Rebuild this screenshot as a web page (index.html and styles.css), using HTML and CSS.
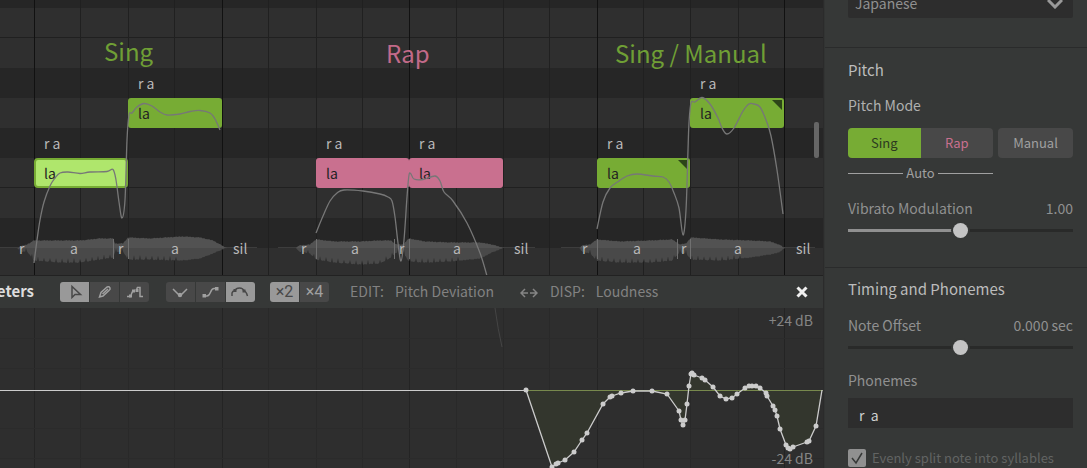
FILE: index.html
```html
<!DOCTYPE html>
<html lang="en">
<head>
<meta charset="utf-8">
<title>Voice editor</title>
<link rel="stylesheet" href="styles.css">
</head>
<body>
<div class="app">
  <main class="editor">
    <section class="roll" aria-label="Piano roll">
      <svg class="canvas" id="roll">
        <g class="keys">
          <rect class="key-dark" y="0" width="100%" height="8"/>
          <rect class="key-dark" y="68" width="100%" height="30"/>
          <rect class="key-dark" y="128" width="100%" height="30"/>
          <rect class="key-dark" y="218" width="100%" height="30"/>
          <rect class="key-line" y="37" width="100%" height="1"/>
          <rect class="key-line" y="187" width="100%" height="1"/>
        </g>
        <g id="roll-grid"></g>
        <g id="waves"></g>
        <g id="notes"></g>
        <g id="pitch"></g>
        <g id="phones"></g>
        <text class="heading sing" x="104" y="61">Sing</text>
        <text class="heading rap" x="386" y="63">Rap</text>
        <text class="heading sing" x="615" y="63">Sing / Manual</text>
        <rect class="scroll-thumb" x="814" y="122" width="5" height="36" rx="2"/>
      </svg>
    </section>
    <header class="toolbar">
      <h2 class="toolbar-title"><span>Parameters</span></h2>
      <div class="group">
        <button class="tool on" aria-label="Select"><svg width="29" height="20"><path d="M12 4.500V15.500L15 12.500H20.500Z"/></svg></button>
        <button class="tool" aria-label="Draw"><svg width="29" height="20"><path d="M9.500 15L11 10.500L17 5Q19 4 20 6Q20.500 7.500 19 8.500L13 14Z M12.500 12L18 7"/></svg></button>
        <button class="tool" aria-label="Step"><svg width="29" height="20"><path d="M7 14.500H11M11 14Q12 8 15 8.500M17 5.500V9.500M17 5.500H20V14.500H23"/><path class="solid" d="M9 12.500h3v3H9zM12 7.500h3v3h-3zM15.500 7h3v3h-3z"/></svg></button>
      </div>
      <div class="group">
        <button class="tool" aria-label="Linear"><svg width="29" height="20"><path d="M7 7L13 13H15L21 7"/><circle class="solid" cx="14" cy="13" r="2.200"/></svg></button>
        <button class="tool" aria-label="Sigmoid"><svg width="29" height="20"><path d="M8 14H11C15 14 14 6.500 18 6.500H21"/><path class="solid" d="M6.500 12h3.500v3.500H6.500zM19 5h3.500v3.500H19z"/></svg></button>
        <button class="tool on" aria-label="Curve"><svg width="29" height="20"><path d="M6 14V11Q6.500 9 9 8.500M9 8.500Q10 6 13.500 6Q17 6 18 9Q20 9 21.500 14"/><path class="solid" d="M7.500 7h3v3h-3zM16.500 7.500h3v3h-3z"/></svg></button>
      </div>
      <div class="group">
        <button class="tool on">×2</button>
        <button class="tool">×4</button>
      </div>
      <div class="param edit"><span>EDIT:</span><span>Pitch Deviation</span></div>
      <button class="swap" aria-label="Swap"><svg width="18" height="12"><path d="M8 6H1M5 2L1 6L5 10M10 6H17M13 2L17 6L13 10"/></svg></button>
      <div class="param"><span>DISP:</span><span>Loudness</span></div>
      <button class="close" aria-label="Close"><svg width="12" height="12"><path d="M1.500 1.500L10.500 10.500M10.500 1.500L1.500 10.500"/></svg></button>
    </header>
    <section class="params" aria-label="Loudness">
      <svg class="canvas" id="params">
        <g id="param-grid"></g>
        <path class="ghost" d="M495 0Q498 22 502 39"/>
        <g id="loudness"></g>
      </svg>
      <span class="scale top">+24 dB</span>
      <span class="scale bottom">-24 dB</span>
    </section>
  </main>
  <aside class="panel">
    <section class="block language">
      <div class="select-box">
        <select class="select" aria-label="Language"><option>Japanese</option></select>
        <svg class="chevron" width="16" height="10"><path d="M1 1L8 8L15 1"/></svg>
      </div>
    </section>
    <section class="block pitch">
      <h2 class="title">Pitch</h2>
      <h3 class="subtitle">Pitch Mode</h3>
      <div class="modes">
        <div class="auto">
          <div class="pair"><button class="mode active">Sing</button><button class="mode pink">Rap</button></div>
          <div class="auto-label">Auto</div>
        </div>
        <button class="mode manual">Manual</button>
      </div>
      <div class="row"><label for="vib">Vibrato Modulation</label><output>1.00</output></div>
      <input class="slider filled" id="vib" type="range" min="0" max="2" step="0.01" value="1">
    </section>
    <section class="block timing">
      <h2 class="title">Timing and Phonemes</h2>
      <div class="row"><label for="offset">Note Offset</label><output>0.000 sec</output></div>
      <input class="slider" id="offset" type="range" min="-1" max="1" step="0.001" value="0">
      <label class="field-label" for="phon">Phonemes</label>
      <input class="field" id="phon" type="text" value="r  a">
      <label class="check"><input type="checkbox" checked><span>Evenly split note into syllables</span></label>
    </section>
  </aside>
</div>
<script src="app.js"></script>
</body>
</html>
```

FILE: styles.css
```css
* { box-sizing: border-box; }
body {
  margin: 0;
  background: #363837;
  color: #909090;
  font: 14px/20px "Noto Sans CJK JP", "Noto Sans", sans-serif;
}
h2, h3 { margin: 0; font-weight: 400; }
button, input, select { font: inherit; color: inherit; border: 0; margin: 0; padding: 0; background: none; }
svg { display: block; fill: none; }

.app { display: grid; grid-template-columns: minmax(0, 1fr) 263px; height: 100vh; overflow: hidden; }
.editor { display: grid; grid-template-rows: 276px auto minmax(0, 1fr); min-width: 0; border-right: 1px solid #2b2b2b; }
.canvas { width: 100%; height: 100%; }

.roll { background: #2f2f2f; border-bottom: 1px solid #222; overflow: hidden; }
.key-dark { fill: #262626; }
.key-line { fill: #202020; }
.beat { fill: #202020; }
.bar { fill: #111; }
.heading { font-size: 24px; font-weight: 400; }
.heading.sing { fill: #6f9f35; }
.heading.rap { fill: #c26a89; }
.scroll-thumb { fill: #666; }
.note { fill: #77ac34; }
.note.pink { fill: #c9708f; }
.note.selected { fill: #afe66c; stroke: #77ac34; stroke-width: 2px; }
.corner { fill: #2d4518; }
.lyric { fill: #222; font-size: 14px; }
.lyric.pale { fill: #b8b8b8; }
.phone { fill: #b8b8b8; font-size: 14px; }
.pitch-line { stroke: #777; stroke-width: 1.300px; }
.wave-top { fill: #525252; }
.wave-bottom { fill: #494949; }
.wave-axis { fill: #3d3d3d; }
.wave-mark { fill: #707070; }

.toolbar { display: flex; align-items: center; height: 32px; background: #363837; }
.toolbar-title { display: flex; justify-content: flex-end; width: 34px; margin: 0 26px 2px 0; overflow: hidden; color: #ddd; font-size: 15px; font-weight: 700; line-height: 20px; }
.group { display: flex; gap: 1px; margin-right: 17px; border-radius: 3px; overflow: hidden; }
.group + .group { margin-right: 15px; }
.tool { width: 29px; height: 20px; background: #484848; color: #a0a0a0; font: 16px/20px Roboto, sans-serif; }
.tool.on { background: #999; color: #484848; }
.tool svg { stroke: currentColor; stroke-width: 1.500px; }
.tool .solid { fill: currentColor; stroke: none; }
.param { display: flex; gap: 11px; margin-bottom: 3px; color: #828282; white-space: nowrap; }
.edit { margin-left: 6px; }
.swap { margin: 2px 12px 0 26px; }
.swap svg { stroke: #858585; stroke-width: 1.500px; }
.close { margin: 0 15px 0 auto; }
.close svg { stroke: #f0f0f0; stroke-width: 3px; }

.params { position: relative; background: #2e2e2e; overflow: hidden; }
.params .beat { fill: #292929; }
.params .bar { fill: #242424; }
.band { fill: #2b2b2b; }
.ghost { stroke: #454545; }
.zero { fill: #78894d; }
.zero.flat { fill: #ccc; }
.area { fill: #33362d; }
.loud { stroke: #ccc; stroke-width: 1.300px; }
.dot { fill: #ccc; }
.scale { position: absolute; right: 10px; color: #858585; }
.scale.top { top: 2px; }
.scale.bottom { bottom: 0; }

.panel { overflow: hidden; border-left: 1px solid #323433; }
.block { padding: 0 14px 0 23px; border-bottom: 1px solid #2a2b2b; }
.language { padding-bottom: 29px; }
.select-box { position: relative; margin-top: -12px; }
.select { display: block; width: 100%; height: 30px; padding: 0 8px 0 7px; background: #2d2d2d; border-radius: 2px; appearance: none; }
.chevron { position: absolute; right: 10px; top: 11px; stroke: #999; stroke-width: 3px; pointer-events: none; }
.title { color: #bcbcbc; font-size: 15px; line-height: 24px; }
.subtitle { color: #b0b0b0; font-size: 14px; line-height: 20px; }
.pitch { padding-top: 10px; padding-bottom: 29px; }
.pitch .subtitle { margin-top: 13px; }
.modes { display: grid; grid-template-columns: 145px 1fr; gap: 5px; align-items: start; margin-top: 13px; }
.pair { display: grid; grid-template-columns: 1fr 1fr; border-radius: 4px; overflow: hidden; }
.mode { height: 30px; background: #484848; color: #a0a0a0; font-size: 13px; }
.mode.active { background: #77ac34; color: #2c3a20; }
.mode.pink { color: #c9708f; }
.mode.manual { border-radius: 4px; }
.auto-label { display: flex; align-items: center; gap: 3px; margin-top: 5px; color: #a0a0a0; font-size: 13px; }
.auto-label::before, .auto-label::after { content: ""; flex: 1; height: 1px; background: #a0a0a0; }
.row { display: flex; justify-content: space-between; }
.pitch .row { margin-top: 15px; }
.slider { display: block; width: 100%; height: 16px; margin-top: 4px; appearance: none; background: linear-gradient(#292a29, #292a29) center / 100% 3px no-repeat; }
.slider.filled { background: linear-gradient(90deg, #909090 50%, #292a29 50%) center / 100% 3px no-repeat; }
.slider::-webkit-slider-thumb { appearance: none; width: 15px; height: 15px; border-radius: 50%; background: #c4c4c4; box-shadow: 0 0 0 2px #363837; }
.timing { padding-top: 9px; border: 0; }
.timing .row { margin-top: 14px; }
.timing .slider { margin-top: 4px; }
.field-label { display: block; margin-top: 15px; }
.field { display: block; width: 100%; height: 30px; margin-top: 8px; padding: 4px 11px 0; background: #2d2d2d; color: #d0d0d0; white-space: pre; }
.check { display: flex; align-items: center; gap: 6px; margin-top: 20px; color: #626463; font-size: 13px; white-space: nowrap; }
.check input { width: 18px; height: 18px; appearance: none; border-radius: 2px; background: #909090 url("data:image/svg+xml,%3Csvg xmlns='http://www.w3.org/2000/svg' viewBox='0 0 18 18'%3E%3Cpath d='M4 9l4 5 6-10' fill='none' stroke='%23363837' stroke-width='1.500'/%3E%3C/svg%3E"); }
```

FILE: app.js
```js
const NS = "http://www.w3.org/2000/svg";
function add(parent, tag, attrs, text) {
  const el = document.createElementNS(NS, tag);
  for (const k in attrs) el.setAttribute(k, attrs[k]);
  if (text) el.textContent = text;
  document.getElementById(parent).appendChild(el);
}

const beats = [34, 80, 128, 174, 222, 268, 316, 362, 409, 456, 503, 549, 597, 643, 690, 738, 784];
beats.forEach((x, i) => {
  const cls = i % 4 && x !== 784 ? "beat" : "bar";
  add("roll-grid", "rect", { class: cls, x, y: 0, width: 1, height: "100%" });
  add("param-grid", "rect", { class: cls, x, y: 0, width: 1, height: "100%" });
});
[30, 60, 120, 150].forEach(y => add("param-grid", "rect", { class: "band", y, width: "100%", height: 1 }));

const notes = [
  [34, 158, 94, "selected"], [128, 98, 94, ""],
  [316, 158, 93, "pink"], [409, 158, 94, "pink"],
  [597, 158, 93, "", true], [690, 98, 94, "", true]
];
notes.forEach(([x, y, w, kind, manual]) => {
  const inset = kind === "selected" ? 1 : 0;
  add("notes", "rect", { class: "note " + kind, x: x + inset, y: y + inset, width: w - 2 * inset, height: 30 - 2 * inset, rx: 3 });
  if (manual) add("notes", "path", { class: "corner", d: `M${x + w - 12} ${y + 2}h10v10z` });
  add("notes", "text", { class: "lyric", x: x + 10, y: y + 21 }, "la");
  add("notes", "text", { class: "lyric pale", x: x + 10, y: y - 9 }, "r a");
});

// Catmull-Rom spline through the given points
function smooth(p) {
  let d = `M${p[0]}`;
  for (let i = 0; i < p.length - 1; i++) {
    const a = p[i - 1] || p[i], b = p[i], c = p[i + 1], e = p[i + 2] || c;
    d += `C${b[0] + (c[0] - a[0]) / 6} ${b[1] + (c[1] - a[1]) / 6} ${c[0] - (e[0] - b[0]) / 6} ${c[1] - (e[1] - b[1]) / 6} ${c}`;
  }
  return d;
}
[
  [[34,263],[37,240],[40,220],[44,202],[50,186],[55,178],[60,173],[68,172],[80,173.5],[90,172],[107,171.500],[113,169.500],[116,180],[119,202],[122,218],[125,200],[127,140],[129,115],[132,113],[137,107],[144,103.500],[152,106],[160,112],[167,115],[180,114],[190,111.500],[200,110.500],[210,113],[215,119],[220,130]],
  [[316,233],[323,216],[330,201],[337,193],[344,190],[363,191],[380,194],[388,197],[392,201],[395,217],[398,243],[401,261],[404,240],[407,197],[409,175],[411,174],[414,179],[423,179.500],[435,176],[440,181],[444,192],[453,201],[467,223],[480,253],[487,276]],
  [[597,229],[603,202],[610,188],[619,181],[627,176],[637,174],[653,176],[663,177],[669,182],[674,193],[679,208],[683,235],[686,210],[688,150],[689,123],[691,103],[695,102],[702,97.500],[710,104],[718,118],[722,128],[727,134],[734,128],[743,111],[749,104],[754,104],[760,107],[766,120],[771,136],[777,170],[783,214]]
].forEach(p => add("pitch", "path", { class: "pitch-line", d: smooth(p) }));

// Envelopes: [x, rise above the axis, depth below the axis]
function at(env, x, k) {
  let i = 1;
  while (i < env.length - 1 && env[i][0] < x) i++;
  const a = env[i - 1], b = env[i];
  return a[k] + (b[k] - a[k]) * (x - a[0]) / (b[0] - a[0]);
}
[
  { env: [[17,0,0],[20,2,4],[27,4,4],[34,8,13],[60,8,15],[80,8,15],[100,10,12],[113,10,10],[115,5,5],[123,5,4],[128,11,12],[150,10,12],[182,12,13],[200,11,11],[213,8,6],[222,3,2],[227,0,0]], marks: [113, 128] },
  { env: [[296,0,0],[299,3,4],[310,4,6],[316,9,12],[335,7,15],[360,7,17],[380,8,16],[391,8,10],[396,4,5],[403,4,5],[409,10,14],[425,7,15],[450,6,14],[480,6,11],[492,4,5],[505,0,0]], marks: [316, 394, 409] },
  { env: [[579,0,0],[582,3,4],[590,4,6],[597,9,13],[620,7,15],[650,8,15],[672,9,13],[680,4,5],[686,5,6],[691,11,12],[720,9,13],[750,8,10],[770,7,7],[779,4,5],[785,0,0]], marks: [597, 677, 690] }
].forEach(({ env, marks }) => {
  const x0 = env[0][0], x1 = env[env.length - 1][0];
  let top = `M${x0} 248`, bottom = top;
  for (let x = x0; x <= x1; x++) {
    const jag = (x * 37 % 11) / 11;
    const notch = x % 6 === 2 && x < x0 + 165 ? 4 : 0;
    top += `L${x} ${248 - Math.max(0, at(env, x, 1) - jag)}`;
    bottom += `L${x} ${248 + Math.max(0, at(env, x, 2) - jag - notch)}`;
  }
  add("waves", "rect", { class: "wave-axis", x: x0 - 18, y: 247, width: x1 - x0 + 48, height: 1 });
  add("waves", "path", { class: "wave-top", d: `${top}L${x1} 248Z` });
  add("waves", "path", { class: "wave-bottom", d: `${bottom}L${x1} 248Z` });
  marks.forEach(x => add("waves", "rect", { class: "wave-mark", x, y: 239, width: 1, height: 20 }));
});
[
  [19, "r"], [70, "a"], [118, "r"], [171, "a"], [233, "sil"],
  [301, "r"], [351, "a"], [399, "r"], [453, "a"], [514, "sil"],
  [582, "r"], [633, "a"], [681, "r"], [734, "a"], [796, "sil"]
].forEach(([x, t]) => add("phones", "text", { class: "phone", x, y: 254 }, t));

const loud = [[526,82],[552,159],[556,156],[558,155],[565,152],[574,144],[582,132],[587,125],[603,96],[610,89],[612,88],[621,85],[633,83],[652,83],[667,86],[679,103],[681,112],[683,117],[685,112],[687,96],[689,78],[691,66],[692,65],[694,67],[702,70],[705,72],[713,79],[720,88],[726,91],[732,90],[737,86],[745,80],[749,78],[752,78],[756,78],[760,80],[766,85],[767,88],[773,98],[775,102],[777,108],[780,121],[786,137],[788,140],[790,141],[793,139],[807,134],[809,133],[816,118],[822,82]];
add("loudness", "path", { class: "area", d: `M${loud.join("L")}Z` });
add("loudness", "rect", { class: "zero", x: 526, y: 82, width: 297, height: 1 });
add("loudness", "rect", { class: "zero flat", x: 0, y: 82, width: 526, height: 1 });
add("loudness", "path", { class: "loud", d: `M${loud.join("L")}` });
loud.slice(0, -1).forEach(([cx, cy]) => add("loudness", "circle", { class: "dot", cx, cy, r: 2.5 }));
```
